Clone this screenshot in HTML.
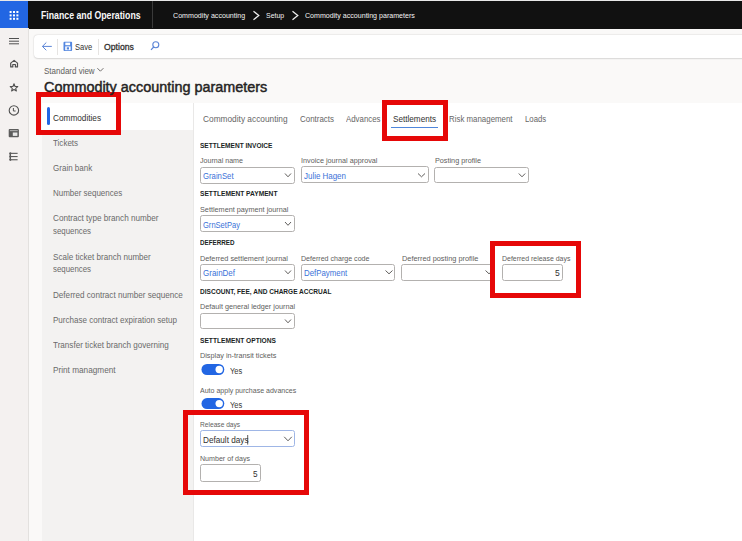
<!DOCTYPE html>
<html><head><meta charset="utf-8"><style>
html,body{margin:0;padding:0;width:742px;height:541px;overflow:hidden;background:#faf9f8;position:relative}
*{box-sizing:border-box}
.t{position:absolute;transform-origin:0 0;font-family:"Liberation Sans",sans-serif;line-height:1;white-space:nowrap}
.a{position:absolute}
</style></head><body>
<!-- top bar -->
<div class="a" style="left:0;top:0;width:742px;height:1px;background:#e8e8e8"></div>
<div class="a" style="left:0;top:1px;width:742px;height:27.8px;background:#111111"></div>
<div class="a" style="left:0;top:1px;width:28px;height:27px;background:#2266e3"></div>
<svg class="a" style="left:0;top:1px" width="28" height="27" viewBox="0 0 28 27">
  <g fill="#ffffff">
    <rect x="9.6" y="10" width="2" height="2"/><rect x="13" y="10" width="2" height="2"/><rect x="16.4" y="10" width="2" height="2"/>
    <rect x="9.6" y="13.4" width="2" height="2"/><rect x="13" y="13.4" width="2" height="2"/><rect x="16.4" y="13.4" width="2" height="2"/>
    <rect x="9.6" y="16.8" width="2" height="2"/><rect x="13" y="16.8" width="2" height="2"/><rect x="16.4" y="16.8" width="2" height="2"/>
  </g>
</svg>
<div class="a" style="left:152px;top:1px;width:1px;height:27px;background:#3a3a3a"></div>
<svg class="a" style="left:250px;top:9px" width="52" height="13" viewBox="0 0 52 13">
  <path d="M3.5 2.2 L8.8 6.5 L3.5 10.8" fill="none" stroke="#f0f0f0" stroke-width="1.25"/>
  <path d="M42.5 2.2 L47.8 6.5 L42.5 10.8" fill="none" stroke="#f0f0f0" stroke-width="1.25"/>
</svg>
<!-- left rail -->
<div class="a" style="left:0;top:28px;width:28px;height:513px;background:#f4f1f0"></div>
<div class="a" style="left:28px;top:28px;width:1px;height:513px;background:#e3e1df"></div>
<svg class="a" style="left:0;top:28px" width="28" height="140" viewBox="0 28 28 140">
  <g fill="none" stroke="#505050" stroke-width="1">
    <path d="M9 38.5 H19 M9 41.2 H19 M9 43.8 H19"/>
    <!-- home -->
    <path d="M10.7 66.9 V63.1 L14.1 60.4 L17.5 63.1 V66.9 H15.4 V64.5 H12.8 V66.9 Z" stroke-width="1.2" stroke-linejoin="round"/>
    <!-- star -->
    <path d="M14 83.8 L15.05 86.45 L17.8 86.6 L15.7 88.35 L16.4 91 L14 89.5 L11.6 91 L12.3 88.35 L10.2 86.6 L12.95 86.45 Z" stroke-width="1.05" stroke-linejoin="round"/>
    <!-- clock -->
    <circle cx="13.9" cy="110.4" r="4.7" stroke-width="1.1"/>
    <path d="M13.4 108 V111 H15.6" stroke-width="1"/>
  </g>
</svg>
<svg class="a" style="left:0;top:120px" width="28" height="50" viewBox="0 120 28 50">
  <rect x="8.7" y="128.9" width="10.2" height="8.3" rx="1" fill="#5c5c5c"/>
  <rect x="9.9" y="130.3" width="7.8" height="0.8" fill="#c8c8c8"/>
  <rect x="12.8" y="132.5" width="4.6" height="3.4" fill="#e8e8e8"/>
  <g fill="#5a5a5a">
    <circle cx="10.3" cy="153.4" r="1.1"/><circle cx="10.3" cy="156.6" r="1.1"/><circle cx="10.3" cy="159.8" r="1.1"/>
    <rect x="10.3" y="152.8" width="7.3" height="1.1"/><rect x="10.3" y="156" width="7.3" height="1.1"/><rect x="10.3" y="159.2" width="7.3" height="1.1"/>
    <rect x="9.6" y="153" width="1.4" height="7"/>
  </g>
</svg>
<!-- action bar -->
<div class="a" style="left:34px;top:35.4px;width:720px;height:23px;background:#ffffff;border-radius:4px;box-shadow:0 0 2px rgba(0,0,0,0.13),0 0.5px 1.5px rgba(0,0,0,0.10)"></div>
<div class="a" style="left:57px;top:39px;width:1px;height:16px;background:#e6e4e2"></div>
<div class="a" style="left:98px;top:39px;width:1px;height:16px;background:#e6e4e2"></div>
<svg class="a" style="left:40px;top:38px" width="130" height="18" viewBox="40 38 130 18">
  <path d="M42.4 46.4 H51.8 M42.4 46.4 L46.3 42.5 M42.4 46.4 L46.3 50.3" fill="none" stroke="#5b84d6" stroke-width="1"/>
  <!-- save icon -->
  <rect x="63.5" y="41.8" width="8.6" height="9.2" rx="1" fill="#5286e0"/>
  <rect x="65.3" y="42.6" width="4.8" height="2.6" fill="#ffffff"/>
  <rect x="65.2" y="46.4" width="5.4" height="3.8" fill="#ffffff"/>
  <rect x="66.8" y="47.3" width="2.2" height="2.2" fill="#5286e0"/>
  <!-- search -->
  <circle cx="155.8" cy="44.8" r="3" fill="none" stroke="#5b84d6" stroke-width="1.1"/>
  <path d="M153.7 47 L151 49.8" stroke="#5b84d6" stroke-width="1.2"/>
</svg>
<svg class="a" style="left:95px;top:66px" width="10" height="8" viewBox="0 0 10 8">
  <path d="M2.4 2.2 L5.4 5.2 L8.4 2.2" fill="none" stroke="#605e5c" stroke-width="0.9"/>
</svg>
<!-- left panel -->
<div class="a" style="left:42px;top:103px;width:151.5px;height:438px;background:#f3f2f1"></div>
<div class="a" style="left:42px;top:103px;width:151.5px;height:27px;background:#ffffff"></div>
<div class="a" style="left:47px;top:107px;width:3px;height:18px;background:#2266e3;border-radius:1.5px"></div>
<!-- content -->
<div class="a" style="left:193.5px;top:103px;width:549px;height:438px;background:#ffffff"></div>
<div class="a" style="left:193px;top:103px;width:1px;height:438px;background:#e9e8e7"></div>
<div class="a" style="left:391px;top:126.5px;width:47px;height:1.6px;background:#4f86db"></div>
<!-- inputs -->
<div class="a" style="left:200px;top:166.5px;width:95px;height:17px;border:1px solid #b3b1af;border-radius:2.5px;background:#fff"></div>
<div class="a" style="left:300.5px;top:166.3px;width:128px;height:17px;border:1px solid #b3b1af;border-radius:2.5px;background:#fff"></div>
<div class="a" style="left:434.4px;top:166.5px;width:94.6px;height:16.8px;border:1px solid #b3b1af;border-radius:2.5px;background:#fff"></div>
<div class="a" style="left:200px;top:215.2px;width:95px;height:17px;border:1px solid #b3b1af;border-radius:2.5px;background:#fff"></div>
<div class="a" style="left:200px;top:263.8px;width:95px;height:17px;border:1px solid #b3b1af;border-radius:2.5px;background:#fff"></div>
<div class="a" style="left:300.6px;top:263.8px;width:94.8px;height:17px;border:1px solid #b3b1af;border-radius:2.5px;background:#fff"></div>
<div class="a" style="left:401.4px;top:264px;width:94px;height:16.5px;border:1px solid #b3b1af;border-radius:2.5px;background:#fff"></div>
<div class="a" style="left:501.5px;top:264.2px;width:61px;height:16.6px;border:1px solid #b3b1af;border-radius:2.5px;background:#fff"></div>
<div class="a" style="left:200px;top:312.8px;width:95px;height:16.6px;border:1px solid #b3b1af;border-radius:2.5px;background:#fff"></div>
<div class="a" style="left:199.6px;top:430.2px;width:95.4px;height:17.1px;border:1px solid #9fb6e6;border-radius:2.5px;background:#fff"></div>
<div class="a" style="left:199.6px;top:464.3px;width:61.2px;height:17.4px;border:1px solid #b3b1af;border-radius:2.5px;background:#fff"></div>
<svg class="a" style="left:0;top:0" width="742" height="541" viewBox="0 0 742 541">
  <g fill="none" stroke="#605e5c" stroke-width="1">
    <path d="M285 173.5 L288 176.8 L291 173.5"/>
    <path d="M418 173.5 L421.5 176.8 L425 173.5"/>
    <path d="M518.8 173.5 L522 176.8 L525.2 173.5"/>
    <path d="M285 222.0 L288 225.3 L291 222.0"/>
    <path d="M285 270.5 L288 273.8 L291 270.5"/>
    <path d="M385.5 270.5 L389 273.8 L392.5 270.5"/>
    <path d="M485.5 270.5 L489 273.8 L492.5 270.5"/>
    <path d="M285 319.5 L288 322.8 L291 319.5"/>
    <path d="M284.2 436.8 L288 440.8 L291.8 436.8"/>
  </g>
  <path d="M247.7 435 V444.6" stroke="#323130" stroke-width="0.8"/>
  <!-- toggles -->
  <rect x="201.5" y="364" width="22.8" height="11" rx="5.5" fill="#2266e3"/>
  <circle cx="219.2" cy="369.5" r="3.7" fill="#fff"/>
  <rect x="201.5" y="398.1" width="22.8" height="11" rx="5.5" fill="#2266e3"/>
  <circle cx="219.2" cy="403.6" r="3.7" fill="#fff"/>
</svg>
<!-- red boxes -->
<div class="a" style="left:36px;top:92px;width:85px;height:43px;border:5px solid #e60808"></div>
<div class="a" style="left:382px;top:100px;width:66px;height:41px;border:5px solid #e60808"></div>
<div class="a" style="left:490px;top:241px;width:91px;height:56.6px;border:5px solid #e60808"></div>
<div class="a" style="left:183px;top:410px;width:126px;height:84.7px;border:5px solid #e60808"></div>

<div class=t style="left:41.00px;top:10.93px;font-size:10px;font-weight:700;color:#f8f8f8;transform:scaleX(0.8743);">Finance and Operations</div>
<div class=t style="left:173.10px;top:12.00px;font-size:7.8px;font-weight:400;color:#f3f3f3;transform:scaleX(0.9112);">Commodity accounting</div>
<div class=t style="left:266.00px;top:12.00px;font-size:7.8px;font-weight:400;color:#f3f3f3;transform:scaleX(0.8910);">Setup</div>
<div class=t style="left:304.60px;top:12.00px;font-size:7.8px;font-weight:400;color:#f3f3f3;transform:scaleX(0.9087);">Commodity accounting parameters</div>
<div class=t style="left:75.00px;top:43.13px;font-size:9.3px;font-weight:400;color:#323130;transform:scaleX(0.8139);">Save</div>
<div class=t style="left:104.20px;top:43.13px;font-size:9.3px;font-weight:400;color:#323130;transform:scaleX(0.9317);-webkit-text-stroke:0.3px #323130;">Options</div>
<div class=t style="left:43.60px;top:67.48px;font-size:9px;font-weight:400;color:#605e5c;transform:scaleX(0.8877);">Standard view</div>
<div class=t style="left:43.60px;top:79.85px;font-size:14px;font-weight:400;color:#252423;transform:scaleX(1.0282);-webkit-text-stroke:0.45px #252423;">Commodity accounting parameters</div>
<div class=t style="left:53.20px;top:112.76px;font-size:9.5px;font-weight:400;color:#323130;transform:scaleX(0.8671);">Commodities</div>
<div class=t style="left:53.30px;top:138.06px;font-size:9.5px;font-weight:400;color:#6a6a6a;transform:scaleX(0.8431);">Tickets</div>
<div class=t style="left:53.30px;top:162.76px;font-size:9.5px;font-weight:400;color:#6a6a6a;transform:scaleX(0.8448);">Grain bank</div>
<div class=t style="left:53.30px;top:187.56px;font-size:9.5px;font-weight:400;color:#6a6a6a;transform:scaleX(0.8395);">Number sequences</div>
<div class=t style="left:53.30px;top:213.16px;font-size:9.5px;font-weight:400;color:#6a6a6a;transform:scaleX(0.8580);">Contract type branch number</div>
<div class=t style="left:53.30px;top:226.36px;font-size:9.5px;font-weight:400;color:#6a6a6a;transform:scaleX(0.8263);">sequences</div>
<div class=t style="left:53.30px;top:251.66px;font-size:9.5px;font-weight:400;color:#6a6a6a;transform:scaleX(0.8493);">Scale ticket branch number</div>
<div class=t style="left:53.30px;top:263.96px;font-size:9.5px;font-weight:400;color:#6a6a6a;transform:scaleX(0.8263);">sequences</div>
<div class=t style="left:53.30px;top:289.66px;font-size:9.5px;font-weight:400;color:#6a6a6a;transform:scaleX(0.8539);">Deferred contract number sequence</div>
<div class=t style="left:53.30px;top:314.96px;font-size:9.5px;font-weight:400;color:#6a6a6a;transform:scaleX(0.8468);">Purchase contract expiration setup</div>
<div class=t style="left:53.30px;top:340.36px;font-size:9.5px;font-weight:400;color:#6a6a6a;transform:scaleX(0.8527);">Transfer ticket branch governing</div>
<div class=t style="left:53.30px;top:365.16px;font-size:9.5px;font-weight:400;color:#6a6a6a;transform:scaleX(0.8649);">Print managment</div>
<div class=t style="left:203.00px;top:115.03px;font-size:9.3px;font-weight:400;color:#666666;transform:scaleX(0.8942);">Commodity accounting</div>
<div class=t style="left:300.00px;top:115.03px;font-size:9.3px;font-weight:400;color:#666666;transform:scaleX(0.8533);">Contracts</div>
<div class=t style="left:346.00px;top:115.03px;font-size:9.3px;font-weight:400;color:#666666;transform:scaleX(0.8461);">Advances</div>
<div class=t style="left:393.00px;top:115.03px;font-size:9.3px;font-weight:400;color:#323130;transform:scaleX(0.8771);">Settlements</div>
<div class=t style="left:449.00px;top:115.03px;font-size:9.3px;font-weight:400;color:#666666;transform:scaleX(0.8481);">Risk management</div>
<div class=t style="left:525.40px;top:115.03px;font-size:9.3px;font-weight:400;color:#666666;transform:scaleX(0.8348);">Loads</div>
<div class=t style="left:200.00px;top:141.80px;font-size:7.8px;font-weight:700;color:#201f1e;transform:scaleX(0.8405);">SETTLEMENT INVOICE</div>
<div class=t style="left:200.00px;top:157.37px;font-size:7.6px;font-weight:400;color:#605e5c;transform:scaleX(0.9335);">Journal name</div>
<div class=t style="left:300.50px;top:157.37px;font-size:7.6px;font-weight:400;color:#605e5c;transform:scaleX(0.9531);">Invoice journal approval</div>
<div class=t style="left:434.50px;top:157.17px;font-size:7.6px;font-weight:400;color:#605e5c;transform:scaleX(0.9549);">Posting profile</div>
<div class=t style="left:203.00px;top:172.08px;font-size:9px;font-weight:400;color:#3b72d8;transform:scaleX(0.8595);">GrainSet</div>
<div class=t style="left:303.60px;top:172.08px;font-size:9px;font-weight:400;color:#3b72d8;transform:scaleX(0.8824);">Julie Hagen</div>
<div class=t style="left:200.00px;top:190.30px;font-size:7.8px;font-weight:700;color:#201f1e;transform:scaleX(0.8514);">SETTLEMENT PAYMENT</div>
<div class=t style="left:200.00px;top:206.27px;font-size:7.6px;font-weight:400;color:#605e5c;transform:scaleX(0.9568);">Settlement payment journal</div>
<div class=t style="left:203.00px;top:221.18px;font-size:9px;font-weight:400;color:#3b72d8;transform:scaleX(0.8389);">GrnSetPay</div>
<div class=t style="left:200.00px;top:239.40px;font-size:7.8px;font-weight:700;color:#201f1e;transform:scaleX(0.8036);">DEFERRED</div>
<div class=t style="left:200.00px;top:254.77px;font-size:7.6px;font-weight:400;color:#605e5c;transform:scaleX(0.9603);">Deferred settlement journal</div>
<div class=t style="left:300.70px;top:254.77px;font-size:7.6px;font-weight:400;color:#605e5c;transform:scaleX(0.9320);">Deferred charge code</div>
<div class=t style="left:401.50px;top:254.77px;font-size:7.6px;font-weight:400;color:#605e5c;transform:scaleX(0.9686);">Deferred posting profile</div>
<div class=t style="left:501.80px;top:254.77px;font-size:7.6px;font-weight:400;color:#605e5c;transform:scaleX(0.9162);">Deferred release days</div>
<div class=t style="left:203.00px;top:269.28px;font-size:9px;font-weight:400;color:#3b72d8;transform:scaleX(0.8896);">GrainDef</div>
<div class=t style="left:303.60px;top:269.28px;font-size:9px;font-weight:400;color:#3b72d8;transform:scaleX(0.8730);">DefPayment</div>
<div class=t style="left:200.00px;top:287.50px;font-size:7.8px;font-weight:700;color:#201f1e;transform:scaleX(0.8391);">DISCOUNT, FEE, AND CHARGE ACCRUAL</div>
<div class=t style="left:200.00px;top:303.47px;font-size:7.6px;font-weight:400;color:#605e5c;transform:scaleX(0.9540);">Default general ledger journal</div>
<div class=t style="left:200.00px;top:337.00px;font-size:7.8px;font-weight:700;color:#201f1e;transform:scaleX(0.8513);">SETTLEMENT OPTIONS</div>
<div class=t style="left:200.00px;top:352.27px;font-size:7.6px;font-weight:400;color:#605e5c;transform:scaleX(0.9585);">Display in-transit tickets</div>
<div class=t style="left:229.90px;top:365.87px;font-size:9.6px;font-weight:400;color:#3a3938;transform:scaleX(0.7777);">Yes</div>
<div class=t style="left:200.00px;top:386.87px;font-size:7.6px;font-weight:400;color:#605e5c;transform:scaleX(0.9258);">Auto apply purchase advances</div>
<div class=t style="left:229.90px;top:399.87px;font-size:9.6px;font-weight:400;color:#3a3938;transform:scaleX(0.7777);">Yes</div>
<div class=t style="left:200.40px;top:421.17px;font-size:7.6px;font-weight:400;color:#605e5c;transform:scaleX(0.8727);">Release days</div>
<div class=t style="left:202.90px;top:435.98px;font-size:9px;font-weight:400;color:#323130;transform:scaleX(0.9102);">Default days</div>
<div class=t style="left:200.40px;top:454.77px;font-size:7.6px;font-weight:400;color:#605e5c;transform:scaleX(0.9337);">Number of days</div>
<div class=t style="left:554.80px;top:268.34px;font-size:9.4px;font-weight:400;color:#323130;transform:scaleX(0.9129);">5</div>
<div class=t style="left:253.30px;top:469.44px;font-size:9.4px;font-weight:400;color:#323130;transform:scaleX(0.8745);">5</div>
</body></html>
